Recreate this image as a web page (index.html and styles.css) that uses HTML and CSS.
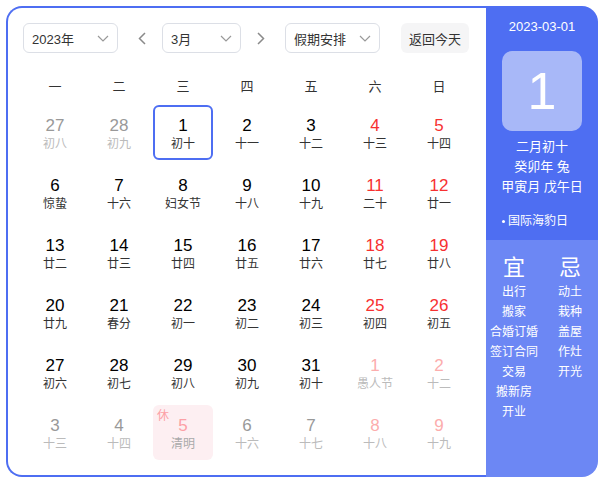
FILE: index.html
```html
<!DOCTYPE html>
<html lang="zh">
<head>
<meta charset="utf-8">
<link rel="stylesheet" href="styles.css">
</head>
<body>
<div class="cal">
  <div class="main">
    <div class="controls">
      <div class="select sel-year"><span>2023年</span><svg class="chev" viewBox="0 0 12 7"><polyline points="1,1 6,6 11,1"/></svg></div>
      <div class="arrow arrow-left"><svg viewBox="0 0 8 13"><polyline points="7,1 1.5,6.5 7,12"/></svg></div>
      <div class="select sel-month"><span>3月</span><svg class="chev" viewBox="0 0 12 7"><polyline points="1,1 6,6 11,1"/></svg></div>
      <div class="arrow arrow-right"><svg viewBox="0 0 8 13"><polyline points="1,1 6.5,6.5 1,12"/></svg></div>
      <div class="select sel-holiday"><span>假期安排</span><svg class="chev" viewBox="0 0 12 7"><polyline points="1,1 6,6 11,1"/></svg></div>
      <div class="today-btn">返回今天</div>
    </div>
    <div class="weekdays">
      <span>一</span><span>二</span><span>三</span><span>四</span><span>五</span><span>六</span><span>日</span>
    </div>
    <div class="days">
      <div class="day other"><b>27</b><i>初八</i></div>
      <div class="day other"><b>28</b><i>初九</i></div>
      <div class="day selected"><b>1</b><i>初十</i></div>
      <div class="day"><b>2</b><i>十一</i></div>
      <div class="day"><b>3</b><i>十二</i></div>
      <div class="day weekend"><b>4</b><i>十三</i></div>
      <div class="day weekend"><b>5</b><i>十四</i></div>

      <div class="day"><b>6</b><i>惊蛰</i></div>
      <div class="day"><b>7</b><i>十六</i></div>
      <div class="day"><b>8</b><i>妇女节</i></div>
      <div class="day"><b>9</b><i>十八</i></div>
      <div class="day"><b>10</b><i>十九</i></div>
      <div class="day weekend"><b>11</b><i>二十</i></div>
      <div class="day weekend"><b>12</b><i>廿一</i></div>

      <div class="day"><b>13</b><i>廿二</i></div>
      <div class="day"><b>14</b><i>廿三</i></div>
      <div class="day"><b>15</b><i>廿四</i></div>
      <div class="day"><b>16</b><i>廿五</i></div>
      <div class="day"><b>17</b><i>廿六</i></div>
      <div class="day weekend"><b>18</b><i>廿七</i></div>
      <div class="day weekend"><b>19</b><i>廿八</i></div>

      <div class="day"><b>20</b><i>廿九</i></div>
      <div class="day"><b>21</b><i>春分</i></div>
      <div class="day"><b>22</b><i>初一</i></div>
      <div class="day"><b>23</b><i>初二</i></div>
      <div class="day"><b>24</b><i>初三</i></div>
      <div class="day weekend"><b>25</b><i>初四</i></div>
      <div class="day weekend"><b>26</b><i>初五</i></div>

      <div class="day"><b>27</b><i>初六</i></div>
      <div class="day"><b>28</b><i>初七</i></div>
      <div class="day"><b>29</b><i>初八</i></div>
      <div class="day"><b>30</b><i>初九</i></div>
      <div class="day"><b>31</b><i>初十</i></div>
      <div class="day other weekend"><b>1</b><i>愚人节</i></div>
      <div class="day other weekend"><b>2</b><i>十二</i></div>

      <div class="day other"><b>3</b><i>十三</i></div>
      <div class="day other"><b>4</b><i>十四</i></div>
      <div class="day other holiday"><span class="rest">休</span><b>5</b><i>清明</i></div>
      <div class="day other"><b>6</b><i>十六</i></div>
      <div class="day other"><b>7</b><i>十七</i></div>
      <div class="day other weekend"><b>8</b><i>十八</i></div>
      <div class="day other weekend"><b>9</b><i>十九</i></div>
    </div>
  </div>
  <div class="side">
    <div class="side-top">
      <div class="date">2023-03-01</div>
      <div class="bigday">1</div>
      <div class="lunar">二月初十</div>
      <div class="lunar">癸卯年 兔</div>
      <div class="lunar">甲寅月 戊午日</div>
      <div class="festival"><span class="dot"></span>国际海豹日</div>
    </div>
    <div class="side-bottom">
      <div class="col">
        <div class="col-title">宜</div>
        <div>出行</div>
        <div>搬家</div>
        <div>合婚订婚</div>
        <div>签订合同</div>
        <div>交易</div>
        <div>搬新房</div>
        <div>开业</div>
      </div>
      <div class="col">
        <div class="col-title">忌</div>
        <div>动土</div>
        <div>栽种</div>
        <div>盖屋</div>
        <div>作灶</div>
        <div>开光</div>
      </div>
    </div>
  </div>
</div>
</body>
</html>
```

FILE: styles.css
```css
* { box-sizing: border-box; }
html, body { margin: 0; padding: 0; background: #fff; }
body {
  padding: 6px;
  font-family: "Liberation Sans", "Noto Sans CJK SC", sans-serif;
  color: #333;
}
.cal {
  display: flex;
  width: 592px;
  height: 471px;
}
.main {
  width: 480px;
  height: 471px;
  border: 2px solid #4e6ef2;
  border-right: none;
  border-radius: 16px 0 0 16px;
  padding: 15px 0 0 15px;
}
.controls {
  display: flex;
  align-items: center;
  height: 30px;
}
.select {
  height: 30px;
  border: 1px solid #dcdfe6;
  border-radius: 6px;
  display: flex;
  align-items: center;
  justify-content: space-between;
  padding: 0 8px 0 8px;
  font-size: 13px;
  color: #333;
}
.sel-year { width: 95px; }
.sel-month { width: 79px; }
.sel-holiday { width: 95px; }
.chev {
  width: 12px;
  height: 7px;
  fill: none;
  stroke: #999;
  stroke-width: 1.2;
}
.arrow {
  width: 24px;
  height: 30px;
  display: flex;
  align-items: center;
  justify-content: center;
}
.arrow svg {
  width: 8px;
  height: 13px;
  fill: none;
  stroke: #8a8a8a;
  stroke-width: 1.5;
}
.arrow-left { margin: 0 8px 0 12px; }
.arrow-right { margin: 0 12px 0 8px; }
.today-btn {
  margin-left: 21px;
  width: 68px;
  height: 30px;
  background: #f5f5f6;
  border-radius: 6px;
  font-size: 13px;
  color: #333;
  display: flex;
  align-items: center;
  justify-content: center;
}
.weekdays {
  display: grid;
  grid-template-columns: repeat(7, 64px);
  margin-top: 16px;
  height: 36px;
  line-height: 36px;
  font-size: 13px;
  color: #333;
  text-align: center;
}
.days {
  display: grid;
  grid-template-columns: repeat(7, 64px);
  grid-auto-rows: 55px;
  row-gap: 5px;
}
.day {
  position: relative;
  margin: 0 2px;
  border-radius: 6px;
  display: flex;
  flex-direction: column;
  align-items: center;
  justify-content: center;
  padding-top: 3px;
}
.day b {
  font-weight: normal;
  font-size: 17px;
  line-height: 20px;
  color: #000;
}
.day i {
  font-style: normal;
  font-size: 12px;
  line-height: 17px;
  color: #333;
}
.day.weekend b { color: #f73131; }
.day.other b { color: #999; }
.day.other i { color: #bbb; }
.day.other.weekend b { color: #fcadad; }
.day.selected { border: 2px solid #4e6ef2; }
.day.holiday { background: #fdeff2; }
.day.holiday b { color: #fca0a6; }
.day.holiday i { color: #aaa; }
.rest {
  position: absolute;
  left: 4px;
  top: 3px;
  font-size: 12px;
  line-height: 16px;
  color: #fca0a6;
}
.side {
  width: 112px;
  height: 471px;
  border-radius: 0 16px 16px 0;
  overflow: hidden;
  display: flex;
  flex-direction: column;
  color: #fff;
}
.side-top {
  height: 234px;
  background: #4e6ef2;
  padding-top: 11px;
  text-align: center;
}
.date {
  font-size: 13px;
  line-height: 20px;
}
.bigday {
  width: 80px;
  height: 80px;
  margin: 14px auto 6px;
  background: #a8b8f8;
  border-radius: 10px;
  font-size: 52px;
  line-height: 80px;
  text-align: center;
}
.lunar {
  font-size: 13px;
  line-height: 20px;
}
.festival {
  margin-top: 14px;
  font-size: 12px;
  line-height: 20px;
  text-align: left;
  padding-left: 16px;
  display: flex;
  align-items: center;
}
.dot {
  width: 3px;
  height: 3px;
  border-radius: 50%;
  background: #fff;
  margin-right: 3px;
}
.side-bottom {
  flex: 1;
  background: #6c87f4;
  display: flex;
  padding-top: 14px;
}
.col {
  width: 56px;
  text-align: center;
  font-size: 12px;
  line-height: 20px;
}
.col-title {
  font-size: 22px;
  line-height: 28px;
}
```
